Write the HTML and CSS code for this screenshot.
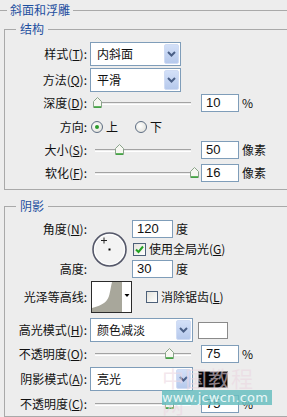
FILE: index.html
```html
<!DOCTYPE html>
<html lang="zh">
<head>
    <meta charset="UTF-8">
    <title>斜面和浮雕</title>
    <link rel="stylesheet" href="styles.css">
</head>
<body>
    <div class="panel">
        <div class="title-bar"><span class="title">斜面和浮雕</span></div>

        <fieldset class="group">
            <legend>结构</legend>
            <div class="row row-select">
                <span class="lbl">样式(<u>T</u>):</span>
                <div class="select"><span class="select-text">内斜面</span><span class="drop-btn"><svg width="9" height="6" viewBox="0 0 9 6"><polyline points="1,1 4.5,4.5 8,1" fill="none" stroke="#4a5f86" stroke-width="2"/></svg></span></div>
            </div>
            <div class="row row-select">
                <span class="lbl">方法(<u>Q</u>):</span>
                <div class="select"><span class="select-text">平滑</span><span class="drop-btn"><svg width="9" height="6" viewBox="0 0 9 6"><polyline points="1,1 4.5,4.5 8,1" fill="none" stroke="#4a5f86" stroke-width="2"/></svg></span></div>
            </div>
            <div class="row row-depth">
                <span class="lbl">深度(<u>D</u>):</span>
                <div class="slider"><span class="thumb" style="left: 3%"></span></div>
                <div class="num">10</div><span class="unit">%</span>
            </div>
            <div class="row row-dir">
                <span class="lbl">方向:</span>
                <span class="radio checked"></span><span class="radio-text">上</span>
                <span class="radio second"></span><span class="radio-text">下</span>
            </div>
            <div class="row row-size">
                <span class="lbl">大小(<u>S</u>):</span>
                <div class="slider"><span class="thumb" style="left: 25%"></span></div>
                <div class="num">50</div><span class="unit">像素</span>
            </div>
            <div class="row row-soft">
                <span class="lbl">软化(<u>F</u>):</span>
                <div class="slider"><span class="thumb" style="left: 100%"></span></div>
                <div class="num">16</div><span class="unit">像素</span>
            </div>
        </fieldset>

        <fieldset class="group group-shadow">
            <legend>阴影</legend>
            <div class="angle-grid">
                <span class="grid-lbl">角度(<u>N</u>):</span>
                <div class="dial">
                    <svg width="37" height="37" viewBox="0 0 37 37">
                        <circle cx="18.5" cy="18.5" r="16.5" fill="#f3f3f3" stroke="#55586a" stroke-width="1.6"/>
                        <circle cx="18.5" cy="18.5" r="15" fill="none" stroke="#ffffff" stroke-width="1"/>
                        <path d="M13 6.5 V12.5 M10 9.5 H16" stroke="#222" stroke-width="1"/>
                        <rect x="17.5" y="17.5" width="2" height="2" fill="#000"/>
                    </svg>
                </div>
                <div class="grid-ctrl"><div class="num num-angle">120</div><span class="unit">度</span></div>
                <div class="grid-ctrl"><span class="check checked"><svg width="11" height="11" viewBox="0 0 11 11"><polyline points="2,5.5 4.5,8 9,2.5" fill="none" stroke="#21a121" stroke-width="2"/></svg></span><span class="check-text">使用全局光(<u>G</u>)</span></div>
                <span class="grid-lbl">高度:</span>
                <div class="grid-ctrl"><div class="num num-angle">30</div><span class="unit">度</span></div>
            </div>
            <div class="row row-contour">
                <span class="lbl">光泽等高线:</span>
                <div class="contour">
                    <svg width="41" height="32" viewBox="0 0 41 32">
                        <rect x="0.5" y="0.5" width="40" height="31" fill="#fff" stroke="#2b2b2b"/>
                        <path d="M21 1 H31 V31 H1 V27 C8 25 13 23 16 19 C19 15 19 9 21 1 Z" fill="#a8a79b"/>
                        <path d="M33.5 13 H38.5 L36 16 Z" fill="#000"/>
                    </svg>
                </div>
                <span class="check check-aa"></span><span class="check-text">消除锯齿(<u>L</u>)</span>
            </div>
            <div class="row row-mode">
                <span class="lbl">高光模式(<u>H</u>):</span>
                <div class="select wide"><span class="select-text">颜色减淡</span><span class="drop-btn"><svg width="9" height="6" viewBox="0 0 9 6"><polyline points="1,1 4.5,4.5 8,1" fill="none" stroke="#4a5f86" stroke-width="2"/></svg></span></div>
                <span class="swatch"></span>
            </div>
            <div class="row row-opacity">
                <span class="lbl">不透明度(<u>O</u>):</span>
                <div class="slider"><span class="thumb" style="left: 75%"></span></div>
                <div class="num">75</div><span class="unit">%</span>
            </div>
            <div class="row row-mode2">
                <span class="lbl">阴影模式(<u>A</u>):</span>
                <div class="select wide"><span class="select-text">亮光</span><span class="drop-btn"><svg width="9" height="6" viewBox="0 0 9 6"><polyline points="1,1 4.5,4.5 8,1" fill="none" stroke="#4a5f86" stroke-width="2"/></svg></span></div>
                <span class="swatch dark"></span>
            </div>
            <div class="row row-opacity">
                <span class="lbl">不透明度(<u>C</u>):</span>
                <div class="slider"><span class="thumb" style="left: 75%"></span></div>
                <div class="num">75</div><span class="unit">%</span>
            </div>
        </fieldset>

        <div class="watermark">
            <span class="wm-logo">中国教程网</span>
            <span class="wm-url">www.jcwcn.com</span>
        </div>
    </div>
</body>
</html>
```

FILE: styles.css
```css
html, body {
    margin: 0;
    padding: 0;
    overflow: hidden;
}
body {
    width: 287px;
    height: 417px;
    background-color: #ededed;
    font-family: "Noto Sans CJK SC", "Liberation Sans", sans-serif;
    font-size: 12px;
    line-height: 14px;
    color: #111;
}
.panel {
    position: relative;
    height: 417px;
    overflow: hidden;
}
u {
    text-decoration: underline;
    text-underline-offset: 1px;
}
.title-bar {
    display: flex;
    align-items: center;
    height: 20px;
}
.title-bar::before {
    content: "";
    width: 7px;
    height: 1px;
    background-color: #a9a9a9;
}
.title-bar::after {
    content: "";
    flex: 1;
    height: 1px;
    background-color: #a9a9a9;
}
.title {
    padding: 0 3px;
    color: #1d4f9f;
}
.group {
    margin: 2px 0 0 4px;
    padding: 5px 0 3px 0;
    border: 1px solid #a9a9a9;
    border-right: none;
    min-width: 0;
}
.group legend {
    margin-left: 11px;
    padding: 0 4px;
    color: #1d4f9f;
    line-height: 14px;
}
.group-shadow {
    margin-top: 9px;
    padding-top: 6px;
}
.row {
    display: flex;
    align-items: center;
}
.lbl {
    width: 82px;
    margin-right: 3px;
    text-align: right;
    white-space: nowrap;
}
.row-select { height: 26px; }
.row-depth { height: 20px; }
.row-dir { height: 27px; }
.row-size { height: 20px; }
.row-soft { height: 26px; }
.row-contour { height: 36px; }
.row-mode { height: 30px; }
.row-opacity { height: 18px; }
.row-mode2 { height: 32px; }

.select {
    display: flex;
    align-items: center;
    box-sizing: border-box;
    width: 91px;
    height: 24px;
    border: 1px solid #7f9db9;
    background-color: #fff;
}
.select.wide {
    width: 103px;
}
.select-text {
    padding-left: 6px;
}
.drop-btn {
    display: flex;
    align-items: center;
    justify-content: center;
    box-sizing: border-box;
    width: 15px;
    height: 20px;
    margin-left: auto;
    margin-right: 1px;
    border: 1px solid #d0dcf4;
    border-radius: 2px;
    background: linear-gradient(#d3e0f8, #b6c9ec);
}
.slider {
    position: relative;
    width: 100px;
    height: 12px;
    margin-left: 3px;
}
.slider::before {
    content: "";
    position: absolute;
    left: 2px;
    right: 2px;
    top: 5px;
    height: 1px;
    border-top: 1px solid #a3a3a3;
    border-bottom: 1px solid #fff;
}
.thumb {
    position: absolute;
    top: 0;
    width: 9px;
    height: 11px;
    margin-left: -3px;
    background: url("data:image/svg+xml;utf8,<svg xmlns='http://www.w3.org/2000/svg' width='9' height='11'><path d='M0.5 4.5 L4.5 0.5 L8.5 4.5 V10.5 H0.5 Z' fill='%23f7f7f2' stroke='%238aa48a'/><path d='M1 10 H8' stroke='%2331a131' stroke-width='1.5'/></svg>") no-repeat;
}
.num {
    box-sizing: border-box;
    width: 38px;
    height: 18px;
    margin-left: 8px;
    padding-left: 4px;
    border: 1px solid #7f9db9;
    background-color: #fff;
    font-family: "Liberation Sans", sans-serif;
    font-size: 13px;
    line-height: 16px;
}
.unit {
    margin-left: 3px;
}
.radio {
    box-sizing: border-box;
    width: 12px;
    height: 12px;
    margin-left: 1px;
    border: 1px solid #5e6e84;
    border-radius: 50%;
    background: radial-gradient(circle at 40% 40%, #ffffff, #dcdcd4);
    position: relative;
}
.radio.checked::after {
    content: "";
    position: absolute;
    left: 3px;
    top: 3px;
    width: 4px;
    height: 4px;
    border-radius: 50%;
    background-color: #2b9b2b;
}
.radio.second {
    margin-left: 17px;
}
.radio-text {
    margin-left: 3px;
}
.angle-grid {
    display: grid;
    grid-template-columns: 85px 42px 1fr;
    grid-template-rows: 20px 20px 20px;
    align-items: center;
}
.grid-lbl {
    padding-right: 3px;
    text-align: right;
}
.dial {
    grid-column: 2;
    grid-row: 1 / 4;
    padding-left: 0.5px;
    padding-top: 3px;
}
.grid-ctrl {
    grid-column: 3;
    display: flex;
    align-items: center;
}
.num.num-angle {
    width: 41px;
    margin-left: 0;
}
.check {
    display: flex;
    align-items: center;
    justify-content: center;
    box-sizing: border-box;
    width: 13px;
    height: 13px;
    margin-left: 1px;
    border: 1px solid #4d6079;
    background: linear-gradient(135deg, #e4e3dc, #ffffff);
}
.check-text {
    margin-left: 3px;
}
.contour {
    margin-left: 1px;
    height: 32px;
}
.check.check-aa {
    width: 12px;
    height: 12px;
    margin-left: 14px;
}
.swatch {
    box-sizing: border-box;
    width: 30px;
    height: 17px;
    margin-left: 5px;
    border: 1px solid #8a8a8a;
    background-color: #fff;
}
.swatch.dark {
    background-color: #050505;
}
.watermark {
    position: absolute;
    left: 160px;
    top: 364px;
    width: 116px;
    height: 42px;
    pointer-events: none;
}
.wm-logo {
    position: absolute;
    left: 2px;
    top: 0;
    font-size: 22px;
    line-height: 26px;
    letter-spacing: 1px;
    color: rgba(235, 215, 225, 0.6);
}
.wm-url {
    position: absolute;
    left: 2px;
    top: 26px;
    width: 110px;
    height: 15px;
    background-color: rgba(104, 190, 192, 0.85);
    color: #e9f7f7;
    font-family: "DejaVu Sans", sans-serif;
    font-size: 13px;
    line-height: 15px;
    letter-spacing: 0.2px;
    white-space: nowrap;
}
```
